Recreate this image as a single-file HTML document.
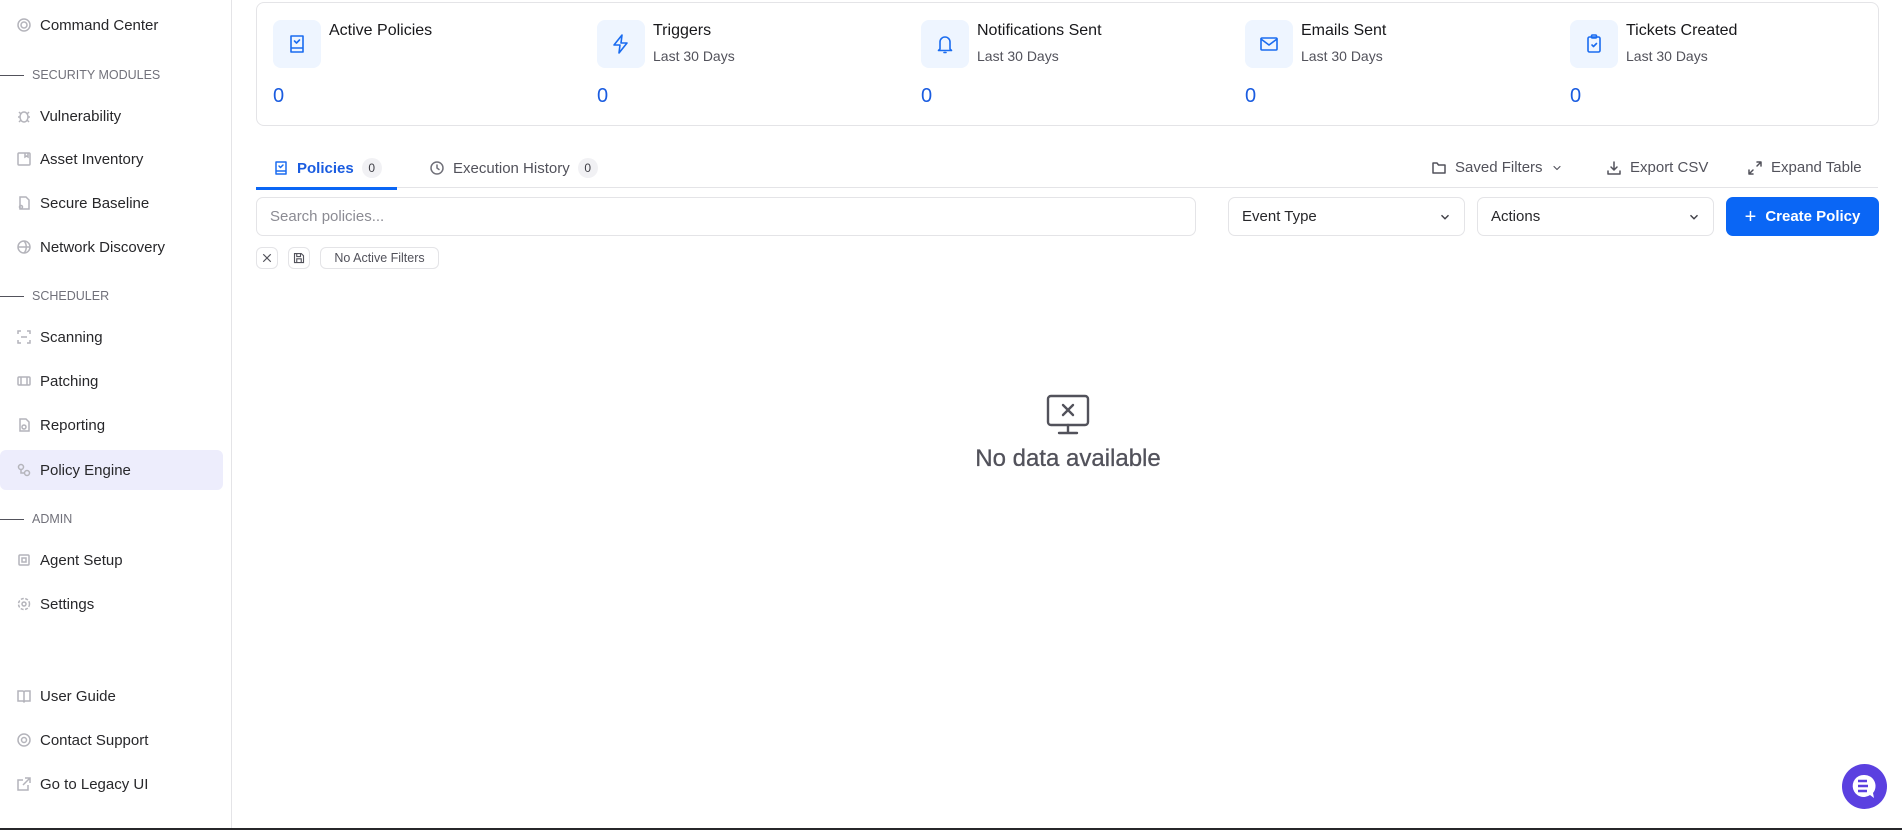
<!DOCTYPE html>
<html><head><meta charset="utf-8"><style>
*{box-sizing:border-box;margin:0;padding:0}
body{width:1902px;height:830px;overflow:hidden;background:#fff;font-family:"Liberation Sans",sans-serif;color:#27272a;position:relative}
.sb{position:absolute;left:0;top:0;width:232px;height:828px;border-right:1px solid #e4e4e7}
.it{position:absolute;left:0;width:223px;height:40px;display:flex;align-items:center;font-size:15px;color:#27272a}
.it svg{position:absolute;left:16px;width:16px;height:16px;fill:none;stroke:#b4b4bb;stroke-width:1.5}
.it span{position:absolute;left:40px}
.sec{position:absolute;left:0;font-size:12.5px;color:#71717a;display:flex;align-items:center}
.sec:before{content:"";display:block;width:24px;height:1px;background:#52525b;margin-right:8px}
.card{position:absolute;left:256px;top:2px;width:1623px;height:124px;border:1px solid #e4e4e7;border-radius:8px}
.st{position:absolute;top:0}
.ib{position:absolute;left:0;top:17px;width:48px;height:48px;border-radius:8px;background:#eef5ff}
.ib svg{position:absolute;left:12px;top:12px;width:24px;height:24px;fill:none;stroke:#1a6cf0;stroke-width:1.6;stroke-linecap:round;stroke-linejoin:round}
.tt{position:absolute;left:56px;top:19px;font-size:16px;white-space:nowrap;color:#18181b}
.sub{position:absolute;left:56px;top:45px;font-size:14px;color:#52525b;white-space:nowrap}
.num{position:absolute;left:0;top:82px;font-size:20px;color:#1a5ce0}
.tab{position:absolute;top:158px;font-size:15px;display:flex;align-items:center;gap:8px}
.bd{display:inline-block;width:20px;height:20px;border-radius:10px;background:#f1f1f4;font-size:12px;text-align:center;line-height:20px;color:#3f3f46}
.tl{position:absolute;top:159px;font-size:15px;color:#52525b;display:flex;align-items:center;gap:8px}
.tl svg,.tab svg{width:16px;height:16px;fill:none;stroke-width:1.5;stroke-linecap:round;stroke-linejoin:round}
.box{position:absolute;top:197px;height:39px;border:1px solid #e4e4e7;border-radius:7px;font-size:15px;display:flex;align-items:center;padding-left:13px}
.chip{position:absolute;top:247px;height:22px;border:1px solid #e4e4e7;border-radius:6px;display:flex;align-items:center;justify-content:center;font-size:12.5px;color:#52525b}
</style></head><body>
<div class="sb">
<div class="it" style="top:5px"><svg viewBox="0 0 16 16"><circle cx="8" cy="8" r="6"/><circle cx="8" cy="8" r="3"/></svg><span>Command Center</span></div>
<div class="sec" style="top:68px">SECURITY MODULES</div>
<div class="it" style="top:96px"><svg viewBox="0 0 16 16"><ellipse cx="8" cy="9" rx="4" ry="5"/><path d="M2 9h2M12 9h2M3 4l2 2M13 4l-2 2M3 14l2-2M13 14l-2-2"/></svg><span>Vulnerability</span></div>
<div class="it" style="top:139px"><svg viewBox="0 0 16 16"><rect x="2" y="2" width="12" height="12" rx="1"/><path d="M9 2v4l1.5-1 1.5 1V2"/></svg><span>Asset Inventory</span></div>
<div class="it" style="top:183px"><svg viewBox="0 0 16 16"><path d="M4 2h6l3 3v9H4z"/><circle cx="5" cy="12" r="1.5"/></svg><span>Secure Baseline</span></div>
<div class="it" style="top:227px"><svg viewBox="0 0 16 16"><circle cx="8" cy="8" r="6"/><path d="M2 8h12M8 2c3 3 3 9 0 12"/></svg><span>Network Discovery</span></div>
<div class="sec" style="top:289px">SCHEDULER</div>
<div class="it" style="top:317px"><svg viewBox="0 0 16 16"><path d="M2 5V2h3M11 2h3v3M14 11v3h-3M5 14H2v-3M5 8h6"/></svg><span>Scanning</span></div>
<div class="it" style="top:361px"><svg viewBox="0 0 16 16"><rect x="2" y="4" width="12" height="8" rx="1"/><path d="M5 4v8M11 4v8"/></svg><span>Patching</span></div>
<div class="it" style="top:405px"><svg viewBox="0 0 16 16"><path d="M4 2h6l3 3v9H4z"/><circle cx="8" cy="10" r="2"/></svg><span>Reporting</span></div>
<div class="it" style="top:450px;background:#ededfc;border-radius:6px"><svg viewBox="0 0 16 16"><circle cx="5" cy="5" r="2.5"/><circle cx="11" cy="11" r="2.5"/><path d="M5 8v3h3"/></svg><span>Policy Engine</span></div>
<div class="sec" style="top:512px">ADMIN</div>
<div class="it" style="top:540px"><svg viewBox="0 0 16 16"><rect x="3" y="3" width="10" height="10" rx="1"/><rect x="6" y="6" width="4" height="4"/></svg><span>Agent Setup</span></div>
<div class="it" style="top:584px"><svg viewBox="0 0 16 16"><circle cx="8" cy="8" r="2"/><circle cx="8" cy="8" r="5.5" stroke-dasharray="3 1.5"/></svg><span>Settings</span></div>
<div class="it" style="top:676px"><svg viewBox="0 0 16 16"><path d="M2 3h5l1 1 1-1h5v10H9l-1 1-1-1H2zM8 4v10"/></svg><span>User Guide</span></div>
<div class="it" style="top:720px"><svg viewBox="0 0 16 16"><circle cx="8" cy="8" r="6"/><circle cx="8" cy="8" r="2.5"/></svg><span>Contact Support</span></div>
<div class="it" style="top:764px"><svg viewBox="0 0 16 16"><path d="M12 9v5H2V4h5M9 2h5v5M14 2L7 9"/></svg><span>Go to Legacy UI</span></div>
</div>

<div class="card">
<div class="st" style="left:16px"><div class="ib"><svg viewBox="0 0 24 24"><path d="M6 4h12v16H6zM6 16h12"/><path d="M9.5 9l2 2 3-3"/></svg></div><div class="tt">Active Policies</div><div class="num">0</div></div>
<div class="st" style="left:340px"><div class="ib"><svg viewBox="0 0 24 24"><path d="M13 3L5 13h6l-1 8 8-10h-6z"/></svg></div><div class="tt">Triggers</div><div class="sub">Last 30 Days</div><div class="num">0</div></div>
<div class="st" style="left:664px"><div class="ib"><svg viewBox="0 0 24 24"><path d="M7 17V10a5 5 0 0110 0v7l1.5 1.5h-13zM11 20.5h2"/></svg></div><div class="tt">Notifications Sent</div><div class="sub">Last 30 Days</div><div class="num">0</div></div>
<div class="st" style="left:988px"><div class="ib"><svg viewBox="0 0 24 24"><rect x="4" y="6" width="16" height="12" rx="1"/><path d="M4 7l8 6 8-6"/></svg></div><div class="tt">Emails Sent</div><div class="sub">Last 30 Days</div><div class="num">0</div></div>
<div class="st" style="left:1313px"><div class="ib"><svg viewBox="0 0 24 24"><rect x="6" y="5" width="12" height="15" rx="1.5"/><rect x="9.5" y="3" width="5" height="3" rx="1"/><path d="M10 13l1.5 1.5 3-3"/></svg></div><div class="tt">Tickets Created</div><div class="sub">Last 30 Days</div><div class="num">0</div></div>
</div>

<div class="tab" style="left:273px;color:#1a5ce0;font-weight:bold"><svg viewBox="0 0 16 16" style="stroke:#1a6cf0"><path d="M3 2h10v12H3zM3 11h10M6 6l1.5 1.5 2.5-2.5"/></svg>Policies<span class="bd" style="font-weight:normal">0</span></div>
<div class="tab" style="left:429px;color:#52525b"><svg viewBox="0 0 16 16" style="stroke:#71717a"><circle cx="8" cy="8" r="6"/><path d="M8 5v3l2 1.5"/></svg>Execution History<span class="bd">0</span></div>
<div style="position:absolute;left:256px;top:187px;width:1622px;height:1px;background:#e4e4e7"></div>
<div style="position:absolute;left:256px;top:187px;width:141px;height:3px;background:#0a66f5"></div>
<div class="tl" style="left:1431px"><svg viewBox="0 0 16 16" style="stroke:#52525b"><path d="M2 3h4l1.5 2H14v8H2z"/></svg>Saved Filters<svg viewBox="0 0 16 16" style="stroke:#52525b;width:12px"><path d="M4 6l4 4 4-4"/></svg></div>
<div class="tl" style="left:1606px"><svg viewBox="0 0 16 16" style="stroke:#52525b"><path d="M8 2v8M5 7l3 3 3-3M2 11v3h12v-3"/></svg>Export CSV</div>
<div class="tl" style="left:1747px"><svg viewBox="0 0 16 16" style="stroke:#52525b"><path d="M10 2h4v4M14 2l-4 4M6 14H2v-4M2 14l4-4"/></svg>Expand Table</div>

<div class="box" style="left:256px;width:940px;color:#8b8b93">Search policies...</div>
<div class="box" style="left:1228px;width:237px;color:#27272a">Event Type<svg viewBox="0 0 16 16" style="position:absolute;right:12px;width:14px;height:14px;fill:none;stroke:#3f3f46;stroke-width:1.6"><path d="M4 6l4 4 4-4"/></svg></div>
<div class="box" style="left:1477px;width:237px;color:#27272a">Actions<svg viewBox="0 0 16 16" style="position:absolute;right:12px;width:14px;height:14px;fill:none;stroke:#3f3f46;stroke-width:1.6"><path d="M4 6l4 4 4-4"/></svg></div>
<div class="box" style="left:1726px;width:153px;background:#0a66f5;border-color:#0a66f5;color:#fff;font-weight:bold;justify-content:center;padding-left:0;gap:9px"><span style="font-weight:normal;font-size:20px;line-height:1">+</span>Create Policy</div>

<div class="chip" style="left:256px;width:22px"><svg viewBox="0 0 16 16" width="12" height="12" style="fill:none;stroke:#52525b;stroke-width:1.6"><path d="M3 3l10 10M13 3L3 13"/></svg></div>
<div class="chip" style="left:288px;width:22px"><svg viewBox="0 0 16 16" width="12" height="12" style="fill:none;stroke:#52525b;stroke-width:1.5"><path d="M2 2h9l3 3v9H2zM5 2v4h5V2M5 14V9h6v5"/></svg></div>
<div class="chip" style="left:320px;width:119px">No Active Filters</div>

<svg viewBox="0 0 48 48" style="position:absolute;left:1044px;top:392px;width:48px;height:48px;fill:none;stroke:#52525b;stroke-width:2.4;stroke-linecap:round;stroke-linejoin:round"><rect x="4" y="4" width="40" height="29" rx="3"/><path d="M24 33v7M15 41h18M19 13l10 10M29 13L19 23"/></svg>
<div style="position:absolute;left:0;width:2136px;top:445px;text-align:center;font-size:24px;color:#52525b;-webkit-text-stroke:0.3px #52525b">No data available</div>

<div style="position:absolute;left:1842px;top:764px;width:45px;height:45px;border-radius:50%;background:#5b40e0"><svg viewBox="0 0 45 45" style="position:absolute;left:0;top:0;width:45px;height:45px"><path d="M22 11a11 11 0 1 0 6 20l4 3-1-5a11 11 0 0 0-9-18z" fill="#fff"/><path d="M16 17h9M16 22h10M16 27h9" stroke="#5b40e0" stroke-width="2.5"/></svg></div>
<div style="position:absolute;left:0;top:828px;width:1902px;height:2px;background:#27272a"></div>
</body></html>
